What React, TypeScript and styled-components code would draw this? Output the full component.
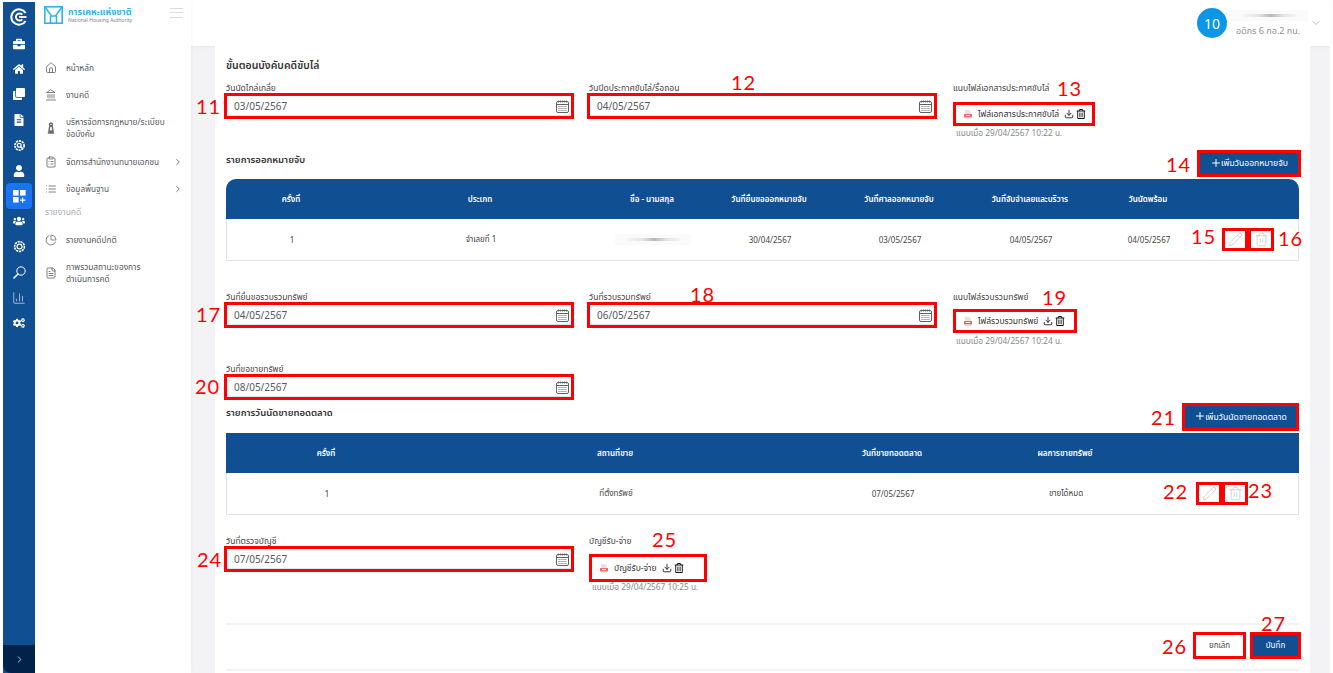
import React from "react";
import styled, { createGlobalStyle } from "styled-components";
import {
  FaBriefcase,
  FaClone,
  FaCogs,
  FaFileAlt,
  FaHome,
  FaRegTrashAlt,
  FaUser,
  FaUsers,
} from "react-icons/fa";
import {
  LuChartColumn,
  LuChartPie,
  LuChevronDown,
  LuChevronRight,
  LuClipboardList,
  LuDownload,
  LuFileText,
  LuHouse,
  LuLandmark,
  LuList,
  LuPencil,
  LuPlus,
  LuTrash2,
} from "react-icons/lu";

const NAVY = "#114f93";
const THAI = `"Noto Sans", "Noto Sans Thai", "Open Sans", "Liberation Sans", sans-serif`;

const Global = createGlobalStyle`
  html, body { margin: 0; padding: 0; background: #fff; }
  body { font-family: ${THAI}; color: #333; overflow: hidden; }
  * { box-sizing: border-box; }
`;

const Page = styled.div`
  display: flex;
  width: 1333px;
  height: 673px;
  overflow: hidden;
  padding-left: 3px;
`;

/* icon rail */
const Rail = styled.aside`
  width: 32px;
  flex: none;
  margin-top: 2px;
  background: ${NAVY};
  display: flex;
  flex-direction: column;
  align-items: center;
  color: #fff;
`;
const RailLogo = styled.div`
  height: 29px;
  display: flex;
  align-items: center;
`;
const RailItem = styled.div<{ $active?: boolean }>`
  width: 26px;
  height: 25.4px;
  display: flex;
  align-items: center;
  justify-content: center;
  border-radius: 4px;
  font-size: 12px;
  background: ${(p) => (p.$active ? "#1b72f2" : "transparent")};
`;
const RailFoot = styled.div`
  margin-top: auto;
  width: 100%;
  height: 28px;
  background: #03224a;
  border-radius: 0 0 0 8px;
  display: flex;
  align-items: center;
  justify-content: center;
  font-size: 11px;
  color: #c9d2dd;
`;

/* text menu */
const Sidebar = styled.nav`
  width: 156px;
  flex: none;
  background: #fff;
  padding: 5px 8px 0 9px;
  box-shadow: 1px 0 3px rgba(0, 0, 0, 0.03);
  z-index: 1;
`;
const Brand = styled.div`
  display: flex;
  align-items: center;
  gap: 5px;
  height: 20px;
  margin-bottom: 29px;
`;
const BrandText = styled.div`
  flex: 1;
  line-height: 1;
`;
const BrandName = styled.div`
  font-size: 9px;
  font-weight: 700;
  color: #2fb4ea;
  white-space: nowrap;
`;
const BrandSub = styled.div`
  font-size: 5px;
  color: #7f8488;
  margin-top: 2px;
  white-space: nowrap;
`;
const Burger = styled.div`
  width: 13px;
  height: 10px;
  margin-bottom: 5px;
  border-top: 1px solid #ddd;
  border-bottom: 1px solid #ddd;
  position: relative;
  &::after {
    content: "";
    position: absolute;
    left: 0;
    right: 0;
    top: 3px;
    border-top: 1px solid #ddd;
  }
`;
const MenuItem = styled.div<{ $tall?: boolean }>`
  display: flex;
  align-items: center;
  gap: 9px;
  padding-left: 1px;
  height: ${(p) => (p.$tall ? "40px" : "27px")};
  font-size: 8.3px;
  line-height: 12px;
  color: #55595e;
  & > svg:first-child {
    width: 12px;
    height: 12px;
    flex: none;
    stroke-width: 1.5;
  }
`;
const MenuLabel = styled.span`
  flex: 1;
`;
const MenuHeading = styled.div`
  font-size: 8.5px;
  color: #a9adb3;
  height: 14px;
  line-height: 14px;
  margin: 2.5px 0 7.5px;
  padding-left: 1px;
`;

/* top bar and content */
const Main = styled.div`
  flex: 1;
  min-width: 0;
  display: flex;
  flex-direction: column;
  background: #f3f3f5;
  margin-right: 3px;
`;
const Topbar = styled.header`
  height: 46px;
  flex: none;
  background: #fff;
  display: flex;
  justify-content: flex-end;
  align-items: center;
  padding-right: 8px;
  box-shadow: 0 1px 3px rgba(0, 0, 0, 0.05);
  color: #b5b8bb;
`;
const Avatar = styled.div`
  width: 30px;
  height: 30px;
  border-radius: 50%;
  background: #0c96e8;
  color: #fff;
  font-size: 14px;
  display: flex;
  align-items: center;
  justify-content: center;
  margin-right: 4px;
`;
const UserBlock = styled.div`
  width: 77px;
  margin-right: 2px;
`;
const Blurred = styled.div<{ $w: number }>`
  width: ${(p) => p.$w}px;
  height: 11px;
  background: linear-gradient(90deg, #f6f6f6, #e4e4e4 30%, #b8b8b8 52%, #e4e4e4 75%, #f6f6f6);
  background-size: 72% 3px;
  background-repeat: no-repeat;
  background-position: center;
  background-color: #fafafa;
`;
const UserMeta = styled.div`
  font-size: 9px;
  line-height: 12px;
  color: #8f9397;
  margin: 4px 0 0 5px;
  white-space: nowrap;
`;
const Body = styled.main`
  flex: 1;
  min-height: 0;
  padding-left: 24px;
  padding-right: 20px;
`;
const Card = styled.section`
  height: 100%;
  background: #fff;
  padding: 11px 11px 0;
`;
const Heading = styled.h2`
  margin: 0 0 10px;
  font-size: 10.5px;
  line-height: 16px;
  font-weight: 600;
  color: #333;
`;
const FormRow = styled.div<{ $h: number }>`
  display: grid;
  grid-template-columns: 363px 364px 1fr;
  height: ${(p) => p.$h}px;
`;
const Field = styled.div`
  display: flex;
  flex-direction: column;
  align-items: flex-start;
`;
const Label = styled.label`
  font-size: 8.5px;
  line-height: 10px;
  color: #444;
  height: 10px;
  white-space: nowrap;
`;
const Marked = styled.div`
  position: relative;
  border: 3px solid #f00;
`;
const DateBox = styled(Marked)`
  width: 350px;
  margin-left: -2px;
  height: 26px;
  background: #fff;
  display: flex;
  align-items: center;
  justify-content: space-between;
  padding: 0 2px 0 7px;
  font-size: 10px;
  color: #55595e;
  box-shadow: inset 0 -1px 0 #dfe3ea;
`;
const FileBox = styled(Marked)<{ $w: number; $h: number; $top: number }>`
  width: ${(p) => p.$w}px;
  height: ${(p) => p.$h}px;
  margin-top: ${(p) => p.$top}px;
  display: flex;
  align-items: center;
  padding-left: 8px;
  gap: 5px;
  font-size: 8.5px;
  color: #333;
  white-space: nowrap;
  & > svg {
    margin-right: 1px;
  }
`;
const FileTools = styled.span`
  display: inline-flex;
  align-items: center;
  gap: 2px;
  color: #111;
  svg {
    width: 10px;
    height: 10px;
  }
`;
const Note = styled.div<{ $top: number }>`
  font-size: 8.3px;
  line-height: 10px;
  margin: ${(p) => p.$top}px 0 0 3px;
  color: #85898d;
  white-space: nowrap;
`;
const SectionBar = styled.div<{ $h: number }>`
  display: flex;
  align-items: flex-start;
  justify-content: space-between;
  height: ${(p) => p.$h}px;
`;
const SectionTitle = styled.h3`
  margin: 0;
  font-size: 9.5px;
  line-height: 19px;
  font-weight: 600;
  color: #333;
`;
const AddButton = styled(Marked)<{ $w: number; $h: number; $over: number }>`
  width: ${(p) => p.$w}px;
  height: ${(p) => p.$h}px;
  margin-right: ${(p) => -p.$over}px;
  background: ${NAVY};
  color: #fff;
  font-size: 8.6px;
  display: flex;
  align-items: center;
  justify-content: center;
  white-space: nowrap;
  svg {
    width: 12px;
    height: 12px;
    margin-right: -1px;
    transform: translateY(-1px);
  }
`;
const TableBox = styled.div`
  margin-top: 2px;
`;
const Row = styled.div<{ $cols: string; $head?: boolean; $round?: boolean }>`
  display: grid;
  grid-template-columns: ${(p) => p.$cols};
  align-items: center;
  height: ${(p) => (p.$head ? "40px" : "42px")};
  background: ${(p) => (p.$head ? NAVY : "#fff")};
  color: ${(p) => (p.$head ? "#fff" : "#444")};
  font-size: 8px;
  font-weight: ${(p) => (p.$head ? 600 : 400)};
  border-radius: ${(p) => (p.$round ? "10px 10px 0 0" : "0")};
  ${(p) => (p.$head ? "" : "border: 1px solid #e2e2e2; border-top: 0;")}
`;
const Cell = styled.div`
  display: flex;
  justify-content: center;
  white-space: nowrap;
  min-width: 0;
`;
const Actions = styled.div<{ $pad: number }>`
  display: flex;
  padding-left: ${(p) => p.$pad}px;
`;
const ActionBox = styled(Marked)`
  width: 26px;
  height: 23px;
  display: flex;
  align-items: center;
  justify-content: center;
  color: #c9cbcd;
  svg {
    width: 15px;
    height: 15px;
    flex: none;
    stroke-width: 1.4;
  }
`;
const Divider = styled.div`
  border-top: 2px solid #f3f3f4;
`;
const Footer = styled.div`
  display: flex;
  justify-content: flex-end;
  gap: 4px;
  padding: 7px 0 10px;
  margin-right: -2px;
`;
const FootButton = styled(Marked)<{ $primary?: boolean }>`
  height: 27px;
  width: ${(p) => (p.$primary ? "51px" : "53px")};
  background: ${(p) => (p.$primary ? NAVY : "#fff")};
  color: ${(p) => (p.$primary ? "#fff" : "#444")};
  font-size: 8px;
  display: flex;
  align-items: center;
  justify-content: center;
`;
/* red callout numbers sit on top of the page, next to the boxes they mark */
const Callout = styled.span<{ $x: number; $y: number }>`
  position: absolute;
  left: ${(p) => p.$x}px;
  top: ${(p) => p.$y}px;
  font-family: Lato, "Liberation Sans", sans-serif;
  font-size: 20px;
  line-height: 20px;
  letter-spacing: 1px;
  color: #f00;
  white-space: nowrap;
  z-index: 3;
`;
const Spacer = styled.div<{ $h: number }>`
  height: ${(p) => p.$h}px;
`;

const Logo = () => (
  <svg width="18" height="18" viewBox="0 0 18 18" fill="none" stroke="#fff">
    <path d="M15.6 5A7.7 7.7 0 1 0 15.6 13" strokeWidth="2" />
    <path d="M12.3 6.7A3.6 3.6 0 1 0 12.3 11.3" strokeWidth="2" />
    <path d="M9 9H16.5" strokeWidth="1.8" />
  </svg>
);
const GearSearch = () => (
  <svg width="13" height="13" viewBox="0 0 24 24" fill="none" stroke="#fff" strokeWidth="3">
    <circle cx="12" cy="12" r="8.5" strokeDasharray="4 1.4" />
    <circle cx="11.5" cy="11.5" r="3.5" strokeWidth="2.4" />
    <path d="M14 14l4 4" />
  </svg>
);
const GridPlus = () => (
  <svg width="13" height="13" viewBox="0 0 13 13" fill="#fff">
    <rect x="0" y="0" width="5.6" height="5.6" />
    <rect x="7" y="0" width="5.6" height="5.6" />
    <rect x="0" y="7" width="5.6" height="5.6" />
    <path d="M9 7.5h1.2v2H12.4v1.2H10.2v2H9v-2H7v-1.2h2z" />
  </svg>
);
const GearCoin = () => (
  <svg width="13" height="13" viewBox="0 0 24 24" fill="none" stroke="#fff" strokeWidth="3">
    <circle cx="12" cy="12" r="9" strokeDasharray="4 1.4" />
    <circle cx="12" cy="12" r="4.5" strokeWidth="2.2" />
  </svg>
);
const Magnifier = () => (
  <svg width="13" height="13" viewBox="0 0 13 13" fill="none" stroke="#fff">
    <circle cx="8" cy="5" r="4.2" strokeWidth="1" />
    <path d="M5 8L1 12" strokeWidth="1.6" strokeLinecap="round" />
  </svg>
);
const BrandMark = () => (
  <svg width="19" height="18" viewBox="0 0 19 18" fill="none" stroke="#2fb4ea" strokeWidth="1.6">
    <rect x="0.8" y="0.8" width="17.4" height="16.4" />
    <path d="M1 1l6.5 9h4L18 1M6.5 17v-7M12.5 17v-7" />
  </svg>
);
const Scales = () => (
  <svg width="12" height="12" viewBox="0 0 12 12" fill="none" stroke="#6a6e72" strokeWidth="0.8">
    <circle cx="6" cy="2.4" r="1.4" />
    <path d="M4.8 4h2.4l.8 5H4zM2.8 11h6.4M3.6 9.5h4.8" />
  </svg>
);
const CalendarMark = () => (
  <svg width="13" height="13" viewBox="0 0 13 13" fill="none" stroke="#5c5f63">
    <rect x="0.5" y="1.5" width="12" height="11" rx="1.5" />
    <path d="M0.5 4.5h12" />
    <path d="M2.5 0.5v2M4.5 0.5v2M6.5 0.5v2M8.5 0.5v2M10.5 0.5v2" strokeWidth="0.9" />
    <path d="M2.5 6.5h2M5.5 6.5h2M8.5 6.5h2M2.5 8.5h2M5.5 8.5h2M8.5 8.5h2M2.5 10.5h2M5.5 10.5h2M8.5 10.5h2" strokeWidth="1" strokeDasharray="1 0.6" />
  </svg>
);
const PdfMark = () => (
  <svg width="8" height="9" viewBox="0 0 8 9">
    <path d="M1 0h4l2 2v7H1z" fill="#e3e3e5" />
    <rect x="0" y="4" width="8" height="3.4" fill="#ea6f6a" />
    <rect x="2" y="5" width="4" height="1" fill="#fff" />
  </svg>
);

const DateField = ({ label, value, tag }: { label: string; value: string; tag: React.ReactNode }) => (
  <Field>
    <Label>{label}</Label>
    <DateBox>
      {value}
      <CalendarMark />
      {tag}
    </DateBox>
  </Field>
);

const FileField = ({
  label,
  file,
  note,
  width,
  height = 24,
  top,
  noteTop,
  tag,
}: {
  label: string;
  file: string;
  note: string;
  width: number;
  height?: number;
  top: number;
  noteTop: number;
  tag: React.ReactNode;
}) => (
  <Field>
    <Label>{label}</Label>
    <FileBox $w={width} $h={height} $top={top}>
      <PdfMark />
      {file}
      <FileTools>
        <LuDownload />
        <FaRegTrashAlt />
      </FileTools>
      {tag}
    </FileBox>
    <Note $top={noteTop}>{note}</Note>
  </Field>
);

const Tag = ({ n, x, y }: { n: number; x: number; y: number }) => (
  <Callout $x={x} $y={y}>
    {n}
  </Callout>
);

const WARRANT_COLS = "130px 248px 96px 138px 122px 140px 96px 1fr";
const SALE_COLS = "200px 378px 176px 170px 1fr";

export default function App() {
  return (
    <Page>
      <Global />
      <Rail>
        <RailLogo>
          <Logo />
        </RailLogo>
        <RailItem><FaBriefcase /></RailItem>
        <RailItem><FaHome /></RailItem>
        <RailItem><FaClone /></RailItem>
        <RailItem><FaFileAlt /></RailItem>
        <RailItem><GearSearch /></RailItem>
        <RailItem><FaUser /></RailItem>
        <RailItem $active><GridPlus /></RailItem>
        <RailItem><FaUsers /></RailItem>
        <RailItem><GearCoin /></RailItem>
        <RailItem><Magnifier /></RailItem>
        <RailItem><LuChartColumn size={14} strokeWidth={1} /></RailItem>
        <RailItem><FaCogs /></RailItem>
        <RailFoot><LuChevronRight /></RailFoot>
      </Rail>
      <Sidebar>
        <Brand>
          <BrandMark />
          <BrandText>
            <BrandName>การเคหะแห่งชาติ</BrandName>
            <BrandSub>National Housing Authority</BrandSub>
          </BrandText>
          <Burger />
        </Brand>
        <MenuItem><LuHouse /><MenuLabel>หน้าหลัก</MenuLabel></MenuItem>
        <MenuItem><LuLandmark /><MenuLabel>งานคดี</MenuLabel></MenuItem>
        <MenuItem $tall><Scales /><MenuLabel>บริหารจัดการกฎหมาย/ระเบียบ<br />ข้อบังคับ</MenuLabel></MenuItem>
        <MenuItem><LuClipboardList /><MenuLabel>จัดการสำนักงานทนายเอกชน</MenuLabel><LuChevronRight size={10} /></MenuItem>
        <MenuItem><LuList /><MenuLabel>ข้อมูลพื้นฐาน</MenuLabel><LuChevronRight size={10} /></MenuItem>
        <MenuHeading>รายงานคดี</MenuHeading>
        <MenuItem><LuChartPie /><MenuLabel>รายงานคดีปกติ</MenuLabel></MenuItem>
        <MenuItem $tall><LuFileText /><MenuLabel>ภาพรวมสถานะของการ<br />ดำเนินการคดี</MenuLabel></MenuItem>
      </Sidebar>
      <Main>
        <Topbar>
          <Avatar>10</Avatar>
          <UserBlock>
            <Blurred $w={77} />
            <UserMeta>อดิกร 6 กอ.2 กน.</UserMeta>
          </UserBlock>
          <LuChevronDown size={12} />
        </Topbar>
        <Body>
          <Card>
            <Heading>ขั้นตอนบังคับคดีขับไล่</Heading>
            <FormRow $h={67}>
              <DateField label="วันนัดไกล่เกลี่ย" value="03/05/2567" tag={<Tag n={11} x={-31} y={0} />} />
              <DateField label="วันปิดประกาศขับไล่/รื้อถอน" value="04/05/2567" tag={<Tag n={12} x={141} y={-24} />} />
              <FileField
                label="แนบไฟล์เอกสารประกาศขับไล่"
                file="ไฟล์เอกสารประกาศขับไล่"
                note="แนบเมื่อ 29/04/2567 10:22 น."
                width={142}
                top={9}
                noteTop={2}
                tag={<Tag n={13} x={101} y={-27} />}
              />
            </FormRow>
            <SectionBar $h={27}>
              <SectionTitle>รายการออกหมายจับ</SectionTitle>
              <AddButton $w={104} $h={27} $over={2}>
                <LuPlus />เพิ่มวันออกหมายจับ
                <Tag n={14} x={-34} y={1} />
              </AddButton>
            </SectionBar>
            <TableBox>
              <Row $head $round $cols={WARRANT_COLS}>
                <Cell>ครั้งที่</Cell>
                <Cell>ประเภท</Cell>
                <Cell>ชื่อ - นามสกุล</Cell>
                <Cell>วันที่ยื่นขอออกหมายจับ</Cell>
                <Cell>วันที่ศาลออกหมายจับ</Cell>
                <Cell>วันที่จับจำเลยและบริวาร</Cell>
                <Cell>วันนัดพร้อม</Cell>
                <Cell />
              </Row>
              <Row $cols={WARRANT_COLS}>
                <Cell>1</Cell>
                <Cell>จำเลยที่ 1</Cell>
                <Cell><Blurred $w={76} /></Cell>
                <Cell>30/04/2567</Cell>
                <Cell>03/05/2567</Cell>
                <Cell>04/05/2567</Cell>
                <Cell>04/05/2567</Cell>
                <Actions $pad={25}>
                  <ActionBox><LuPencil /><Tag n={15} x={-34} y={-5} /></ActionBox>
                  <ActionBox><LuTrash2 /><Tag n={16} x={27} y={-3} /></ActionBox>
                </Actions>
              </Row>
            </TableBox>
            <Spacer $h={31} />
            <FormRow $h={72}>
              <DateField label="วันที่ยื่นขอรวบรวมทรัพย์" value="04/05/2567" tag={<Tag n={17} x={-31} y={-1} />} />
              <DateField label="วันที่รวบรวมทรัพย์" value="06/05/2567" tag={<Tag n={18} x={100} y={-21} />} />
              <FileField
                label="แนบไฟล์รวบรวมทรัพย์"
                file="ไฟล์รวบรวมทรัพย์"
                note="แนบเมื่อ 29/04/2567 10:24 น."
                width={124}
                top={7}
                noteTop={3}
                tag={<Tag n={19} x={86} y={-25} />}
              />
            </FormRow>
            <FormRow $h={39}>
              <DateField label="วันที่ขอขายทรัพย์" value="08/05/2567" tag={<Tag n={20} x={-32} y={-1} />} />
            </FormRow>
            <SectionBar $h={28}>
              <SectionTitle>รายการวันนัดขายทอดตลาด</SectionTitle>
              <AddButton $w={117} $h={28} $over={0}>
                <LuPlus />เพิ่มวันนัดขายทอดตลาด
                <Tag n={21} x={-34} y={1} />
              </AddButton>
            </SectionBar>
            <TableBox>
              <Row $head $cols={SALE_COLS}>
                <Cell>ครั้งที่</Cell>
                <Cell>สถานที่ขาย</Cell>
                <Cell>วันที่ขายทอดตลาด</Cell>
                <Cell>ผลการขายทรัพย์</Cell>
                <Cell />
              </Row>
              <Row $cols={SALE_COLS}>
                <Cell>1</Cell>
                <Cell>ที่ตั้งทรัพย์</Cell>
                <Cell>07/05/2567</Cell>
                <Cell>ขายได้หมด</Cell>
                <Actions $pad={45}>
                  <ActionBox><LuPencil /><Tag n={22} x={-36} y={-4} /></ActionBox>
                  <ActionBox><LuTrash2 /><Tag n={23} x={23} y={-5} /></ActionBox>
                </Actions>
              </Row>
            </TableBox>
            <Spacer $h={21} />
            <FormRow $h={87}>
              <DateField label="วันที่ตรวจบัญชี" value="07/05/2567" tag={<Tag n={24} x={-30} y={0} />} />
              <FileField
                label="บัญชีรับ-จ่าย"
                file="บัญชีรับ-จ่าย"
                note="แนบเมื่อ 29/04/2567 10:25 น."
                width={118}
                height={28}
                top={8}
                noteTop={0}
                tag={<Tag n={25} x={60} y={-28} />}
              />
            </FormRow>
            <Divider />
            <Footer>
              <FootButton>ยกเลิก<Tag n={26} x={-34} y={1} /></FootButton>
              <FootButton $primary>บันทึก<Tag n={27} x={8} y={-22} /></FootButton>
            </Footer>
            <Divider />
          </Card>
        </Body>
      </Main>
    </Page>
  );
}
